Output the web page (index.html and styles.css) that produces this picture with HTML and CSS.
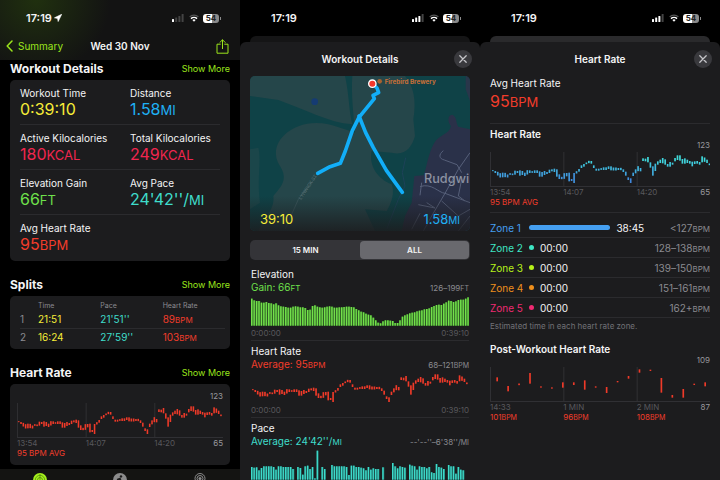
FILE: index.html
```html
<!DOCTYPE html>
<html lang="en">
<head>
  <meta charset="UTF-8" />
  <meta name="viewport" content="width=device-width, initial-scale=1" />
  <title>Workout - Wed 30 Nov</title>
  <link rel="stylesheet" href="styles.css">
</head>
<body>
  <!-- Shared icons -->
  <svg class="sprite" aria-hidden="true">
    <symbol id="signal" viewBox="0 0 12 8">
      <rect x="0" y="5" width="2" height="3" rx="0.5" />
      <rect x="3.2" y="3.6" width="2" height="4.4" rx="0.5" class="bar2" />
      <rect x="6.4" y="2" width="2" height="6" rx="0.5" class="bar3" />
      <rect x="9.6" y="0" width="2" height="8" rx="0.5" class="bar4" />
    </symbol>
    <symbol id="wifi" viewBox="0 0 10 8">
      <path d="M0.6 2.9a6.3 6.3 0 0 1 8.8 0" fill="none" stroke="#555" stroke-width="1.2" />
      <path d="M2 4.6a4.3 4.3 0 0 1 6 0" fill="none" stroke="#fff" stroke-width="1.5" />
      <path d="M3.4 6a2.3 2.3 0 0 1 3.2 0L5 7.8z" fill="#fff" />
    </symbol>
    <symbol id="close" viewBox="0 0 18 18">
      <path d="M5.8 5.8l6.4 6.4M12.2 5.8l-6.4 6.4" fill="none" stroke="#c4c4c8" stroke-width="1.3" stroke-linecap="round" />
    </symbol>
  </svg>

  <div class="screens">
    <section class="screen summary" aria-label="Summary">
      <div class="top">
        <div class="status">
          <span class="time">17:19</span>
          <svg class="location" viewBox="0 0 10 10"><path d="M9.6 0.4L0.6 4.8l3.9 0.7 0.7 3.9z" fill="#fff" stroke="#fff" stroke-width="0.8" stroke-linejoin="round" /></svg>
          <svg class="signal weak"><use href="#signal" /></svg>
          <svg class="wifi"><use href="#wifi" /></svg>
          <span class="battery">54</span>
        </div>
        <nav class="nav">
          <a class="back" href="#">
            <svg viewBox="0 0 7 12"><path d="M6 1L1.2 6 6 11" fill="none" stroke="currentColor" stroke-width="1.5" stroke-linecap="round" stroke-linejoin="round" /></svg>
            Summary
          </a>
          <h1>Wed 30 Nov</h1>
          <button class="share" aria-label="Share">
            <svg viewBox="0 0 13 15"><path d="M4.3 5.2H1v9h11v-9H8.7M6.5 9.6V1M3.9 3.4L6.5 0.8l2.6 2.6" fill="none" stroke="currentColor" stroke-width="1" stroke-linejoin="round" stroke-linecap="round" /></svg>
          </button>
        </nav>
      </div>

      <main class="content">
        <header class="section-head">
          <h2>Workout Details</h2>
          <a href="#">Show More</a>
        </header>
        <div class="card">
          <div class="metrics">
            <div><p class="label">Workout Time</p><p class="value yellow">0:39:10</p></div>
            <div><p class="label">Distance</p><p class="value blue">1.58<small>MI</small></p></div>
          </div>
          <div class="metrics">
            <div><p class="label">Active Kilocalories</p><p class="value pink">180<small>KCAL</small></p></div>
            <div><p class="label">Total Kilocalories</p><p class="value pink">249<small>KCAL</small></p></div>
          </div>
          <div class="metrics">
            <div><p class="label">Elevation Gain</p><p class="value green">66<small>FT</small></p></div>
            <div><p class="label">Avg Pace</p><p class="value teal">24'42''/<small>MI</small></p></div>
          </div>
          <div class="metrics">
            <div><p class="label">Avg Heart Rate</p><p class="value red">95<small>BPM</small></p></div>
          </div>
        </div>

        <header class="section-head">
          <h2>Splits</h2>
          <a href="#">Show More</a>
        </header>
        <div class="card splits">
          <table>
            <thead>
              <tr><th></th><th>Time</th><th>Pace</th><th>Heart Rate</th></tr>
            </thead>
            <tbody>
              <tr><td>1</td><td class="yellow">21:51</td><td class="teal">21'51''</td><td class="red">89<small>BPM</small></td></tr>
              <tr><td>2</td><td class="yellow">16:24</td><td class="teal">27'59''</td><td class="red">103<small>BPM</small></td></tr>
            </tbody>
          </table>
        </div>

        <header class="section-head">
          <h2>Heart Rate</h2>
          <a href="#">Show More</a>
        </header>
        <div class="card plot-card">
          <p class="scale-top">123</p>
          <svg class="plot" data-chart="heart" data-grid></svg>
          <div class="ticks"><span>13:54</span><span>14:07</span><span>14:20</span><b>65</b></div>
          <p class="avg red">95 BPM AVG</p>
        </div>
      </main>

      <footer class="tabs">
        <svg viewBox="0 0 14 14"><circle cx="7" cy="7" r="7" fill="#a6f11d" /><g fill="none" stroke="#3c6b08" stroke-width="0.6"><circle cx="7" cy="7" r="4.7" /><circle cx="7" cy="7" r="2.5" /><path d="M7 1v6" /></g></svg>
        <svg viewBox="0 0 14 14"><circle cx="7" cy="7" r="7" fill="#8b8b8b" /><circle cx="8" cy="3.4" r="1.2" fill="#1a1a1a" /><path d="M4 6.6l3-1.4 1 2.3 2 .4M7 5.5L6.4 8.6l1.6 3M6.4 8.6L4 10" fill="none" stroke="#1a1a1a" stroke-width="1.2" /></svg>
        <svg viewBox="0 0 14 14"><g fill="none" stroke="#8b8b8b" stroke-width="1"><circle cx="7" cy="5.5" r="5" /><circle cx="7" cy="5.5" r="3" /></g><circle cx="7" cy="5.5" r="1.5" fill="#8b8b8b" /><path d="M5.6 8h2.8L7.8 13H6.2z" fill="#8b8b8b" /></svg>
      </footer>
    </section>

    <section class="screen" aria-label="Workout Details">
      <div class="status">
        <span class="time">17:19</span>
        <svg class="signal"><use href="#signal" /></svg>
        <svg class="wifi"><use href="#wifi" /></svg>
        <span class="battery">54</span>
      </div>
      <div class="behind"></div>
      <div class="sheet">
        <header class="sheet-head">
          <h2>Workout Details</h2>
          <button class="close" aria-label="Close"><svg><use href="#close" /></svg></button>
        </header>

        <div class="map">
          <svg viewBox="15 20 660 465" preserveAspectRatio="xMidYMid slice">
            <defs>
              <linearGradient id="fade" x1="0" y1="0" x2="0" y2="1">
                <stop offset="0" stop-color="#1c1c1e" stop-opacity="0" />
                <stop offset="1" stop-color="#1c1c1e" stop-opacity="0.85" />
              </linearGradient>
            </defs>
            <rect x="15" y="20" width="660" height="465" fill="#0f4247" />
            <path d="M15 20H300C312 70 312 130 322 165C250 160 180 120 100 92L15 80z" fill="#25464a" />
            <path d="M322 20H480C505 50 515 90 505 150L510 200C500 235 480 260 440 250L380 245C370 290 400 330 440 345C450 370 440 400 425 425L360 420L390 485H40C60 440 90 420 85 380C110 350 130 330 105 290C85 260 90 225 115 200C150 165 200 155 250 165C290 175 310 185 330 190C325 130 318 70 322 20z" fill="#25464a" />
            <path d="M15 240L40 235C50 270 35 330 45 400L15 420z" fill="#1b464a" />
            <path d="M675 20V95L662 60V20z" fill="#29364a" />
            <path d="M675 180L640 172C632 160 636 142 622 136C606 138 608 158 618 170C612 196 582 196 568 220C550 250 546 290 536 318L508 320L500 400L480 440L470 485H675z" fill="#2a3149" />
            <path d="M482 265L472 310L480 350L460 390L425 480" fill="none" stroke="#1d4258" stroke-width="3" />
            <path d="M215 320L160 390L120 480" fill="none" stroke="#39565b" stroke-width="3" />
            <g fill="none" stroke="#57607a" stroke-width="3">
              <path d="M595 244C580 256 582 268 598 272L636 286L650 310M675 250L640 300L600 372L560 440L535 485" />
              <path d="M530 340L525 378M525 352C560 340 580 370 600 372L675 400M520 406L570 416L545 400M590 395L640 440L675 420M570 430L620 470M500 480L525 432M675 440L640 485M650 330L640 380L660 395" />
            </g>
            <text class="map-road" transform="translate(168 392) rotate(-56)">LYNWICK ST</text>
            <circle cx="209" cy="97" r="10" fill="#153b72" />
            <text class="map-town" x="537" y="340">Rudgwi</text>
            <path d="M382 43L396 56L401 70L384 78L388 88L342 144L322 184L301 245L286 282L255 292L218 312" fill="none" stroke="#12aef8" stroke-width="11" stroke-linecap="round" stroke-linejoin="round" />
            <path d="M342 140L362 190L385 235L424 303L472 369" fill="none" stroke="#12aef8" stroke-width="11" stroke-linecap="round" stroke-linejoin="round" />
            <circle cx="404" cy="36" r="7" fill="#a8612f" />
            <circle cx="382" cy="43" r="11" fill="#f5382c" stroke="#fff" stroke-width="4" />
            <text class="map-place" x="419" y="45">Firebird Brewery</text>
            <rect x="15" y="380" width="660" height="105" fill="url(#fade)" />
          </svg>
          <div class="map-info">
            <span class="yellow">39:10</span>
            <span class="blue">1.58<small>MI</small></span>
          </div>
        </div>

        <div class="segmented">
          <button>15 MIN</button>
          <button class="active" aria-pressed="true">ALL</button>
        </div>

        <div class="graphs">
          <article class="graph">
            <h3>Elevation</h3>
            <div class="graph-sub"><span class="green">Gain: 66<small>FT</small></span><span class="range">126–199<small>FT</small></span></div>
            <svg data-chart="elevation"></svg>
            <div class="ends"><span>0:00:00</span><span>0:39:10</span></div>
          </article>
          <article class="graph">
            <h3>Heart Rate</h3>
            <div class="graph-sub"><span class="red">Average: 95<small>BPM</small></span><span class="range">68–121<small>BPM</small></span></div>
            <svg data-chart="heart"></svg>
            <div class="ends"><span>0:00:00</span><span>0:39:10</span></div>
          </article>
          <article class="graph">
            <h3>Pace</h3>
            <div class="graph-sub"><span class="teal">Average: 24'42''/<small>MI</small></span><span class="range">--'--''–6'38''/<small>MI</small></span></div>
            <svg data-chart="pace"></svg>
          </article>
        </div>
      </div>
    </section>

    <section class="screen" aria-label="Heart Rate">
      <div class="status">
        <span class="time">17:19</span>
        <svg class="signal"><use href="#signal" /></svg>
        <svg class="wifi"><use href="#wifi" /></svg>
        <span class="battery">54</span>
      </div>
      <div class="behind lighter"></div>
      <div class="sheet">
        <header class="sheet-head">
          <h2>Heart Rate</h2>
          <button class="close" aria-label="Close"><svg><use href="#close" /></svg></button>
        </header>

        <div class="average">
          <p class="label">Avg Heart Rate</p>
          <p class="value red">95<small>BPM</small></p>
        </div>

        <div class="rate-block">
          <h3>Heart Rate</h3>
          <p class="scale-top">123</p>
          <svg class="plot" data-chart="zones" data-grid></svg>
          <div class="ticks"><span>13:54</span><span>14:07</span><span>14:20</span><b>65</b></div>
          <p class="avg red">95 BPM AVG</p>
        </div>

        <ul class="zones">
          <li class="zone1"><span class="name">Zone 1</span><i class="full"></i><span class="time">38:45</span><span class="bpm">&lt;127<small>BPM</small></span></li>
          <li class="zone2"><span class="name">Zone 2</span><i></i><span class="time">00:00</span><span class="bpm">128–138<small>BPM</small></span></li>
          <li class="zone3"><span class="name">Zone 3</span><i></i><span class="time">00:00</span><span class="bpm">139–150<small>BPM</small></span></li>
          <li class="zone4"><span class="name">Zone 4</span><i></i><span class="time">00:00</span><span class="bpm">151–161<small>BPM</small></span></li>
          <li class="zone5"><span class="name">Zone 5</span><i></i><span class="time">00:00</span><span class="bpm">162+<small>BPM</small></span></li>
        </ul>
        <p class="note">Estimated time in each heart rate zone.</p>

        <div class="post">
          <h3>Post-Workout Heart Rate</h3>
          <p class="scale-top">109</p>
          <svg class="plot" data-chart="post" data-grid></svg>
          <div class="ticks"><span>14:33</span><span>1 MIN</span><span>2 MIN</span><b>87</b></div>
          <div class="ticks readings"><span>101<small>BPM</small></span><span>96<small>BPM</small></span><span>108<small>BPM</small></span></div>
        </div>
      </div>
    </section>
  </div>

  <script src="charts.js"></script>
</body>
</html>
```
FILE: styles.css
```css
:root {
  --sheet: #1c1c1e;
  --line: #2b2b2e;
  --grey: #8b8b90;
  --dim: #58585c;
  --accent: #9be51c;
  --yellow: #f6ec38;
  --blue: #1fb0f5;
  --pink: #f0264f;
  --green: #6fe04c;
  --teal: #3fdccb;
  --red: #f23c2b;
}
* {
  box-sizing: border-box;
}
body {
  margin: 0;
  background: #000;
  color: #f4f4f5;
  font-family: Inter, "Liberation Sans", sans-serif;
  font-size: 10px;
}
h1, h2, h3, p, ul {
  margin: 0;
  padding: 0;
}
button {
  border: none;
  padding: 0;
  font-family: inherit;
  color: inherit;
  cursor: pointer;
}
a {
  color: var(--accent);
  text-decoration: none;
}
small {
  line-height: 0;
}
svg {
  display: block;
}
.sprite {
  position: absolute;
  width: 0;
  height: 0;
}
.yellow { color: var(--yellow); }
.blue { color: var(--blue); }
.pink { color: var(--pink); }
.green { color: var(--green); }
.teal { color: var(--teal); }
.red { color: var(--red); }

.screens {
  display: grid;
  grid-template-columns: repeat(3, minmax(0, 1fr));
  height: 100vh;
  overflow: hidden;
}
.screen {
  display: flex;
  flex-direction: column;
  min-height: 0;
  overflow: hidden;
}

/* Status bar */
.status {
  display: flex;
  align-items: center;
  height: 36px;
  padding: 0 21px 0 31px;
  flex-shrink: 0;
}
.status .time {
  font-size: 11px;
  font-weight: 600;
  line-height: 14px;
}
.location {
  width: 8px;
  height: 8px;
  margin-left: 2px;
}
.signal {
  --last: #444;
  width: 12px;
  height: 8px;
  margin-left: auto;
  fill: #fff;
}
.signal.weak {
  --rest: #444;
}
.bar2, .bar3 {
  fill: var(--rest, #fff);
}
.bar4 {
  fill: var(--last);
}
.wifi {
  width: 10px;
  height: 8px;
  margin: 0 4px 0 5px;
}
.battery {
  position: relative;
  width: 16px;
  border-radius: 3px;
  background: linear-gradient(90deg, #fff 55%, #8a8a8a 55%);
  color: #222;
  font-size: 8px;
  font-weight: 700;
  line-height: 9px;
  text-align: center;
}
.battery::after {
  content: "";
  position: absolute;
  top: 3px;
  right: -2px;
  width: 1px;
  height: 3px;
  background: #8a8a8a;
}

/* Summary screen */
.top {
  height: 60px;
  flex-shrink: 0;
  background: radial-gradient(circle at 15% 0, #20300f, transparent 35%), #131313;
}
.summary .status {
  padding-left: 26px;
}
.nav {
  display: grid;
  grid-template-columns: 1fr auto 1fr;
  align-items: center;
  height: 20px;
  padding: 0 11px;
}
.back {
  display: flex;
  align-items: center;
  gap: 5px;
  margin-left: -5px;
}
.back svg {
  width: 7px;
  height: 12px;
}
.nav h1 {
  font-size: 10px;
  font-weight: 600;
}
.share {
  justify-self: end;
  background: none;
  color: var(--accent);
}
.share svg {
  width: 13px;
  height: 15px;
}
.content {
  padding: 0 10px;
}
.section-head {
  display: flex;
  justify-content: space-between;
  align-items: center;
  height: 16px;
  margin: 15px 0 4px;
}
.section-head:first-child {
  margin-top: 0;
}
.section-head h2 {
  font-size: 12px;
  font-weight: 700;
}
.section-head a {
  font-size: 9px;
}
.card {
  border-radius: 5px;
  background: var(--sheet);
}
.metrics {
  display: grid;
  grid-template-columns: 1fr 1fr;
  column-gap: 20px;
  margin: 0 10px;
  padding: 6px 0;
  border-bottom: 1px solid var(--line);
}
.metrics:last-child {
  padding-bottom: 8px;
  border: none;
}
.label {
  font-size: 10px;
  line-height: 14px;
  white-space: nowrap;
}
.value {
  font-size: 16px;
  line-height: 18px;
}
.value small {
  font-size: 13px;
}
.splits {
  padding: 3px 5px 4px 10px;
}
table {
  width: 100%;
  table-layout: fixed;
  border-collapse: collapse;
}
th, td {
  padding: 0;
  text-align: left;
  font-weight: 400;
}
th {
  height: 12px;
  color: var(--grey);
  font-size: 7px;
}
th:first-child {
  width: 18px;
}
td {
  height: 17px;
  font-size: 10px;
}
td small {
  font-size: 8px;
}
td:first-child {
  color: var(--grey);
}
tbody tr + tr {
  border-top: 1px solid var(--line);
}

/* Plots with time ticks */
.plot-card {
  padding: 7px;
}
.scale-top {
  margin-bottom: 2px;
  color: #98989d;
  font-size: 8px;
  line-height: 10px;
  text-align: right;
}
.plot {
  width: 100%;
  height: 35px;
}
.ticks {
  position: relative;
  display: grid;
  grid-template-columns: repeat(3, 1fr);
  color: var(--dim);
  font-size: 8px;
  line-height: 10px;
}
/* Bottom of the scale, over the end of the last tick's cell */
.ticks b {
  position: absolute;
  right: 0;
  color: #98989d;
  font-weight: 400;
}
.readings {
  color: var(--red);
}
.readings small {
  font-size: 7px;
}
.avg {
  font-size: 8px;
  line-height: 10px;
}
.tabs {
  display: grid;
  grid-template-columns: repeat(3, 1fr);
  justify-items: center;
  margin-top: 4px;
  padding: 4px 0 20px;
  background: #141412;
}
.tabs svg {
  width: 14px;
  height: 14px;
}

/* Sheets */
.behind {
  height: 6px;
  margin: 0 10px;
  flex-shrink: 0;
  border-radius: 6px 6px 0 0;
  background: #151516;
}
.behind.lighter {
  background: #2a2a2c;
}
.sheet {
  flex: 1 0 auto;
  padding: 0 10px;
  border-radius: 6px 6px 0 0;
  background: var(--sheet);
}
.sheet-head {
  display: grid;
  grid-template-columns: 18px 1fr 18px;
  align-items: center;
  height: 34px;
  margin-right: -2px;
  margin-left: -2px;
}
.sheet-head h2 {
  grid-column: 2;
  font-size: 10px;
  font-weight: 600;
  text-align: center;
}
.close {
  width: 18px;
  height: 18px;
  border-radius: 50%;
  background: #39393d;
}
.close svg {
  width: 18px;
  height: 18px;
}
.map {
  position: relative;
  border-radius: 5px;
  overflow: hidden;
}
.map > svg {
  width: 100%;
  height: auto;
}
.map-info {
  position: absolute;
  right: 10px;
  bottom: 3px;
  left: 10px;
  display: flex;
  justify-content: space-between;
  font-size: 13px;
  line-height: 18px;
}
.map-info small {
  font-size: 10px;
}
.map-road {
  fill: #5a7276;
  font-size: 14px;
}
.map-town {
  fill: #8c92a2;
  font-size: 38px;
  font-weight: 500;
}
.map-place {
  fill: #c87038;
  font-size: 19px;
  font-weight: 700;
}
.segmented {
  display: grid;
  grid-template-columns: 1fr 1fr;
  margin: 9px 0 4px;
  padding: 1px;
  border-radius: 5px;
  background: #343438;
}
.segmented button {
  height: 18px;
  border-radius: 4px;
  background: none;
  font-size: 8px;
  font-weight: 600;
}
.segmented .active {
  background: #69696e;
}
.graphs {
  padding: 0 1px;
}
.graph {
  padding: 4px 0 2px;
  border-bottom: 1px solid var(--line);
}
.graph:last-child {
  border: none;
}
.graph h3 {
  font-size: 10px;
  font-weight: 400;
  line-height: 13px;
}
.graph-sub {
  display: flex;
  justify-content: space-between;
  align-items: baseline;
  font-size: 10px;
  line-height: 12px;
}
.graph-sub small {
  font-size: 8px;
}
.graph-sub .range {
  color: var(--grey);
  font-size: 8px;
}
.graph-sub .range small {
  font-size: 7px;
}
.graph svg {
  width: 100%;
  height: 34px;
}
.ends {
  display: flex;
  justify-content: space-between;
  color: var(--dim);
  font-size: 8px;
  line-height: 10px;
}

/* Heart rate sheet */
.average {
  height: 48px;
  border-bottom: 1px solid var(--line);
}
.average .value {
  line-height: 22px;
}
.rate-block {
  padding: 4px 0 5px;
  border-bottom: 1px solid var(--line);
}
.rate-block h3, .post h3 {
  font-size: 10px;
  font-weight: 600;
  line-height: 12px;
}
.zones {
  padding-top: 5px;
  list-style: none;
}
.zones li {
  display: flex;
  align-items: center;
  height: 20px;
  border-bottom: 1px solid var(--line);
  color: var(--zone);
}
.zones .name {
  width: 39px;
}
.zones i {
  width: 5px;
  height: 5px;
  border-radius: 3px;
  background: var(--zone);
}
.zones .full {
  width: 37%;
}
.zones .time {
  margin-left: 6px;
  color: #f4f4f5;
}
.zones .bpm {
  margin-left: auto;
  color: var(--grey);
}
.zones small {
  font-size: 8px;
}
.zone1 { --zone: #459ff0; }
.zone2 { --zone: #3ee6c4; }
.zone3 { --zone: #b6f21a; }
.zone4 { --zone: #ee8f1c; }
.zone5 { --zone: #ef2a72; }
.note {
  color: #717176;
  font-size: 8px;
  line-height: 16px;
}
.post {
  padding-top: 9px;
}
```
FILE: charts.js
```js
(function() {
  const NS = 'http://www.w3.org/2000/svg';

  // Each sample is [middle, spread], measured down from the top of the plot
  const heart = [
    [56,3],[60,6],[65,11],[70,13],[69,14],[69,13],[72,9],[66,5],[67,5],[62,12],[60,6],[63,16],[63,12],[67,10],[61,13],
    [59,8],[60,5],[59,8],[59,8],[66,16],[67,14],[63,12],[63,6],[58,10],[55,6],[55,10],[63,22],[74,14],[78,7],[72,17],
    [68,10],[75,26],[84,6],[78,30],[61,7],[55,8],[44,8],[40,8],[34,5],[30,7],[31,8],[44,8],[53,6],[53,6],[51,5],
    [50,8],[50,8],[47,8],[49,12],[51,9],[51,9],[51,6],[51,7],[56,8],[65,12],[80,8],[86,14],[67,10],[58,12],[50,15],
    [53,10],[23,8],[24,8],[23,16],[39,16],[57,28],[46,22],[33,10],[28,10],[26,16],[30,16],[40,8],[37,14],[35,6],[23,10],
    [17,14],[18,16],[28,14],[27,16],[28,10],[31,8],[36,14],[32,8],[31,8],[34,8],[22,18],[23,13],[28,10],[37,5]
  ];
  const post = [
    [37,12],[65,16],[52,5],[34,32],[60,4],[63,4],[54,16],[50,8],[54,28],[60,4],
    [69,18],[44,4],[31,8],[12,10],[10,4],[55,44],[88,8],[79,26],[52,4],[52,12]
  ];
  const elevation = [
    81,76,74,74,69,69,71,68,67,64,67,61,58,57,56,54,54,57,58,57,55,55,53,47,48,59,61,57,55,54,
    55,57,58,57,54,54,55,55,56,57,57,56,55,50,46,42,40,36,33,31,24,16,9,7,13,16,16,15,14,8,
    8,16,27,31,34,37,39,40,43,45,46,49,50,52,56,59,62,63,62,66,70,75,74,71,73,77,78,78,81,85
  ];
  const pace = [
    38,36,37,28,35,40,40,40,40,38,30,40,40,38,38,38,38,32,0,38,35,15,40,42,32,38,4,87,0,38,
    32,0,0,44,40,40,40,40,40,38,14,42,42,38,38,36,34,28,38,30,34,32,32,0,37,0,0,0,50,40,
    34,40,38,36,0,45,42,40,30,40,38,38,34,38,22,20,47,38,36,32,0,44,40,40,18,38,30,28,0,0
  ];

  function bar(svg, x, y, width, height, color) {
    const rect = document.createElementNS(NS, 'rect');
    rect.setAttribute('x', x);
    rect.setAttribute('y', y);
    rect.setAttribute('width', width);
    rect.setAttribute('height', height);
    rect.setAttribute('fill', color);
    svg.appendChild(rect);
  }

  function drawGrid(svg, bottom) {
    [0, 220, 440].forEach(x => bar(svg, x, 0, 3, bottom, '#303034'));
    bar(svg, 0, bottom - 2, 660, 3, '#303034');
  }

  function drawRange(svg, samples, start, end, colorFor) {
    const step = (end - start) / (samples.length - 1);
    samples.forEach(([mid, spread], i) => {
      bar(svg, start + i * step - 2, mid - spread / 2, 5, spread, colorFor(mid));
    });
  }

  function drawColumns(svg, samples, color, fill) {
    const step = 655 / (samples.length - 1);
    samples.forEach((height, i) => {
      if (!height) return;
      bar(svg, i * step, 95 - height, 6, height, fill);
      bar(svg, i * step, 95 - height, 4, height, color);
    });
  }

  document.querySelectorAll('svg[data-chart]').forEach(svg => {
    const kind = svg.dataset.chart;
    const grid = 'grid' in svg.dataset;
    const height = grid ? 105 : 102;
    svg.setAttribute('viewBox', `0 0 660 ${height}`);
    svg.setAttribute('preserveAspectRatio', 'none');
    if (grid) drawGrid(svg, height - 1);

    if (kind === 'heart') drawRange(svg, heart, 5, 653, () => '#ef3a29');
    // Higher rates shift from blue towards teal
    if (kind === 'zones') drawRange(svg, heart, 8, 658, mid => `hsl(${170 + mid / 2}, 70%, 56%)`);
    if (kind === 'post') drawRange(svg, post, 21, 645, () => '#ef3a29');
    if (kind === 'elevation') drawColumns(svg, elevation, '#74e04c', '#3c8a2a');
    if (kind === 'pace') drawColumns(svg, pace, '#3fdccb', '#1f7a73');
  });
})();
```
